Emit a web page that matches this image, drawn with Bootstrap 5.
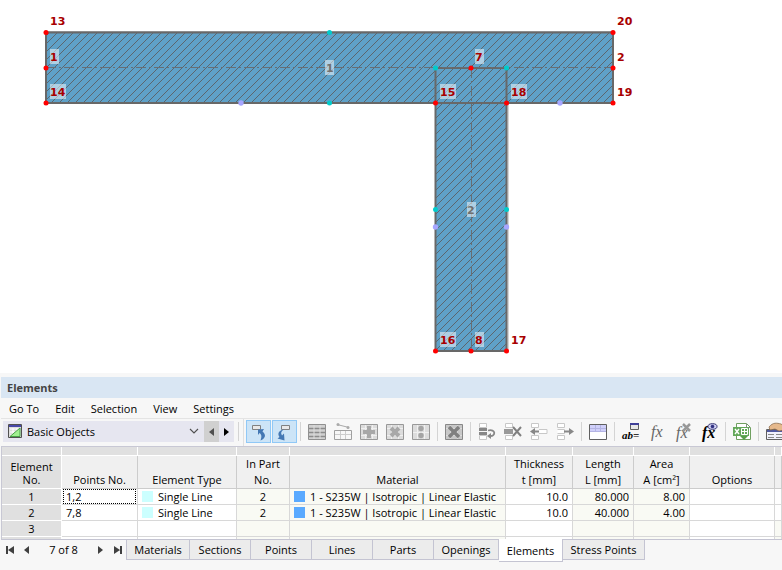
<!DOCTYPE html>
<html lang="en">
<head>
<meta charset="utf-8">
<meta name="viewport" content="width=device-width, initial-scale=1">
<title>Elements</title>
<link href="https://cdn.jsdelivr.net/npm/bootstrap@5.3.0/dist/css/bootstrap.min.css" rel="stylesheet">
<style>
  body { font: 11px/16px "Open Sans", "Noto Sans", sans-serif; color: #000; background: #f7f7f7; }
  button, select { font: inherit; color: inherit; }
  .model text { font: bold 11px "DejaVu Sans", sans-serif; fill: #a80000; }
  .model .element-no { fill: #707070; }
  .elements-panel { padding-left: 1px; }
  .panel-title { font-size: 11px; line-height: 21px; font-weight: 700; color: #444; background: #d9e6f3; padding-left: 6px; margin: 0; }
  .menu-bar { height: 21px; padding: 1px 0 0 8px; gap: 16px; border-bottom: 1px solid #e4e4e4; }
  .menu-bar a { color: #000; text-decoration: none; line-height: 20px; }
  .tool-bar { height: 27px; padding: 1px 0 3px 2px; }
  .tool-bar > * { flex: none; }
  .tool-bar svg { overflow: visible; }
  .tool-bar button, .pager button { border: 0; background: none; padding: 0; display: flex; align-items: center; justify-content: center; }
  .tool-btn { width: 26px; height: 23px; }
  .tool-bar .tool-on { width: 25px; height: 23px; background: #cce4f7; border: 1px solid #90c8f6; margin-right: 1px; }
  .tool-bar .tool-on + .tool-sep { margin-left: 2px; }
  .tool-sep { width: 1px; height: 19px; margin: 2px 3px; background: #d4d4d4; }
  .tool-edge { width: 1px; height: 27px; margin: -1px 2px 0 1px; background: #e0e0e0; }
  .formula { font: italic 16px "Liberation Serif", serif; fill: #666; }
  .formula-dark { font-weight: bold; fill: #000; }
  .parameter { font: italic bold 11px "Liberation Serif", serif; }
  .picker { width: 201px; height: 21px; margin-top: 1px; background: #e6e6f0; }
  .picker select { appearance: none; border: 0; background: none; padding: 0 24px; width: 100%; height: 21px; }
  .picker svg { pointer-events: none; left: 5px; top: 3px; }
  .picker svg.chev { left: auto; right: 5px; top: 7px; }
  .tool-bar .step { width: 15px; height: 21px; margin-top: 1px; background: #e6e6f0; }
  .tool-bar .step-off { background: #d0d0d0; }
  .grid-box { border-top: 1px solid #c8c8d4; border-bottom: 1px solid #c4c4d2; border-left: 1px solid #c8c8d4; }
  .grid-table { table-layout: fixed; width: 100%; border-collapse: separate; border-spacing: 0; }
  .grid-table th, .grid-table td { padding: 0; height: 16px; line-height: 15px; border-right: 1px solid #d8d8d8; border-bottom: 1px solid #d8d8d8; background: #fff; white-space: nowrap; overflow: hidden; }
  .grid-table thead th { font-weight: 400; text-align: center; vertical-align: bottom; background: #f0f0f0; height: 32px; line-height: 16px; border-color: #ccc; }
  .grid-table .strip td { height: 9px; background: #e0e0e0; border-color: #fff; }
  .grid-table tbody th, .grid-table thead th:first-child { font-weight: 400; text-align: center; background: #e0e0e0; border-color: #fff; }
  .grid-table thead th:first-child { padding-bottom: 2px; line-height: 13px; }
  .grid-table .calc { background: #f9faf4; }
  .grid-table .num { text-align: right; padding-right: 4px; }
  .grid-table .more td, .grid-table .more th { height: 2px; border-bottom: 0; }
  .grid-table .points { padding-left: 4px; }
  .grid-table .with-focus { padding-left: 0; }
  .focus-cell { outline: 1px dotted #000; outline-offset: -1px; padding-left: 3px; margin: 0 1px; }
  .swatch { width: 11px; height: 11px; margin: 0 5px 0 4px; }
  .swatch-line { background: #ccffff; }
  .swatch-steel { background: #5aaaff; }
  .c-no { width: 60px; } .c-points { width: 76px; } .c-type { width: 99px; } .c-part { width: 53px; } .c-material { width: 216px; }
  .c-thick { width: 67px; } .c-length { width: 61px; } .c-area { width: 56px; } .c-options { width: 85px; }
  .pager { width: 125px; height: 20px; }
  .pager button { width: 17px; height: 20px; }
  .sheet-tab { border: 1px solid #c4c4d2; border-width: 0 1px 1px 0; background: #ececec; height: 20px; padding: 0; }
  .sheet-tab:first-child { border-left-width: 1px; }
  .sheet-tab.active { background: #fff; height: 23px; margin-top: -1px; padding-top: 1px; }
  .w-sm-tab { width: 61px; } .w-md-tab { width: 64px; } .w-op-tab { width: 65px; } .w-lg-tab { width: 82px; }
</style>
<script src="https://cdn.jsdelivr.net/npm/bootstrap@5.3.0/dist/js/bootstrap.bundle.min.js"></script>
</head>
<body>
<main>
<svg class="model d-block w-100 bg-white" viewBox="0 0 782 373" role="img" aria-label="Cross-section model">
  <defs>
    <pattern id="hatch" width="8" height="8" patternUnits="userSpaceOnUse" patternTransform="translate(2 0)"><path d="M-1 9L9 -1M-1 1L1 -1M7 9L9 7" stroke="#5c666e" fill="none"/></pattern>
  </defs>
  <path d="M46 32H613V103H506.500V351H435.500V103H46Z" fill="#5fa1c8"/>
  <path d="M46 32H613V103H506.500V351H435.500V103H46Z" fill="url(#hatch)"/>
  <path d="M45 31.500H614M508 104V352" stroke="#b0b0b0" fill="none"/>
  <path d="M46 32.500H613V103H46ZM435.500 68H506.500V351H435.500Z" fill="none" stroke="#686868" stroke-width="2"/>
  <path d="M46 67.500H613M471.500 68V351" fill="none" stroke="#666e75" stroke-dasharray="10 3 2 3"/>
  <path d="M50 49h9v15h-9zM50 84h16v15h-16zM325 60h9v15h-9zM475 49h9v15h-9zM440 84h16v15h-16zM511 84h16v15h-16zM467 202h9v15h-9zM440 332h16v15h-16zM475 332h9v15h-9z" fill="#fff" fill-opacity="0.5"/>
  <text x="50" y="25">13</text><text x="50" y="61">1</text><text x="50" y="96">14</text>
  <text x="617" y="25">20</text><text x="617" y="61">2</text><text x="617" y="96">19</text>
  <text x="475" y="61">7</text><text x="440" y="96">15</text><text x="511" y="96">18</text>
  <text x="440" y="344">16</text><text x="475" y="344">8</text><text x="511" y="344">17</text>
  <text class="element-no" x="326" y="72">1</text><text class="element-no" x="467" y="214">2</text>
  <g fill="#f00"><circle cx="46" cy="32.500" r="2.500"/><circle cx="46" cy="68" r="2.500"/><circle cx="46" cy="103" r="2.500"/><circle cx="613" cy="32.500" r="2.500"/><circle cx="613" cy="68" r="2.500"/><circle cx="613" cy="103" r="2.500"/><circle cx="471" cy="68" r="2.500"/><circle cx="435.500" cy="103" r="2.500"/><circle cx="506.500" cy="103" r="2.500"/><circle cx="435.500" cy="351" r="2.500"/><circle cx="471" cy="351" r="2.500"/><circle cx="506.500" cy="351" r="2.500"/></g>
  <g fill="#00cccc"><circle cx="329.500" cy="32.500" r="2.500"/><circle cx="329.500" cy="103" r="2.500"/><circle cx="435.500" cy="68" r="2.500"/><circle cx="506.500" cy="68" r="2.500"/><circle cx="435.500" cy="209.500" r="2.500"/><circle cx="506.500" cy="209.500" r="2.500"/></g>
  <g fill="#a6a6ff"><circle cx="241" cy="103" r="2.700"/><circle cx="560" cy="103" r="2.700"/><circle cx="435.500" cy="227" r="2.700"/><circle cx="506.500" cy="227" r="2.700"/></g>
</svg>

<section class="elements-panel pt-1">
  <h1 class="panel-title">Elements</h1>
  <nav class="menu-bar d-flex" aria-label="Table menu">
    <a href="#">Go To</a><a href="#">Edit</a><a href="#">Selection</a><a href="#">View</a><a href="#">Settings</a>
  </nav>
  <div class="tool-bar d-flex overflow-hidden" role="toolbar" aria-label="Table tools">
    <div class="picker position-relative">
      <svg class="position-absolute" width="14" height="14" viewBox="0 0 14 14"><path d="M.5.5h13v13H.5z" fill="#ddd" stroke="#505050"/><path d="M1 1h12v2H1z" fill="#4848a8"/><path d="M2 5h10M2 8h10M2 11h10M5 4v9M9 4v9" stroke="#fff"/><path d="M2 12.500L12 4v8.500z" fill="#a0f090" stroke="#48a048"/></svg>
      <select aria-label="Table group"><option>Basic Objects</option></select>
      <svg class="chev position-absolute" width="10" height="7" viewBox="0 0 10 7"><path d="M1 1l4 4 4-4" fill="none" stroke="#505050" stroke-width="1.100"/></svg>
    </div>
    <button class="step step-off" aria-label="Previous table"><svg width="5" height="8"><path d="M5 0v8L0 4z" fill="#505050"/></svg></button>
    <button class="step" aria-label="Next table"><svg width="5" height="8"><path d="M0 0v8l5-4z"/></svg></button>
    <span class="tool-sep ms-1"></span><span class="tool-edge"></span>
    <button class="tool-on" aria-label="Select in model"><svg width="18" height="18" viewBox="0 0 18 18"><path d="M2.500 2.500h8v4h-8z" fill="#e8e8e8" stroke="#808080"/><path d="M8 6.500l6-.5-1.500 2.500c4 3 3 7-2 9 1.500-4 1-6-1-7.500L8 12z" fill="#4478b4"/></svg></button>
    <button class="tool-on" aria-label="Follow selection"><svg width="18" height="18" viewBox="0 0 18 18"><path d="M5.500 2.500h8v4h-8z" fill="#e8e8e8" stroke="#808080"/><path d="M8 6.500c-5 .5-7 4-4.500 7.500L1.500 15.500l7 2-.5-7-2 2C4.500 10 5 8 8 6.500z" fill="#4478b4"/></svg></button>
    <span class="tool-sep"></span>
    <button class="tool-btn" aria-label="Fill table"><svg width="18" height="18" viewBox="0 0 18 18"><path d="M.5 1.500h17v15H.5z" fill="#d0d0d0" stroke="#909090"/><path d="M1 5.500h16M1 9.500h16M1 13.500h16" stroke="#8c8c8c" stroke-width="1.500"/><path d="M6 2v14M12 2v14" stroke="#ddd"/></svg></button>
    <button class="tool-btn" aria-label="Polyline"><svg width="18" height="18" viewBox="0 0 18 18"><path d="M1 11.500h16M6.500 8v8M11.500 8v8" stroke="#ccc"/><path d="M.5 7.500h17v9H.5z" fill="none" stroke="#a0a0a0"/><path d="M3 1.500l12 3" stroke="#aaa"/><circle cx="4" cy="1.500" r="1.500" fill="#aaa"/><circle cx="14" cy="4.500" r="1.500" fill="#aaa"/></svg></button>
    <button class="tool-btn" aria-label="Add"><svg width="18" height="18" viewBox="0 0 18 18"><path d="M.5 1.500h17v15H.5z" fill="#dcdcdc" stroke="#999"/><path d="M1 5.500h16M1 12.500h16M5.500 2v14M12.500 2v14" stroke="#f0f0f0"/><path d="M7 3h4v4h4v4h-4v4H7v-4H3V7h4z" fill="#a8a8a8"/></svg></button>
    <button class="tool-btn" aria-label="Multiply"><svg width="18" height="18" viewBox="0 0 18 18"><path d="M.5 1.500h17v15H.5z" fill="#dcdcdc" stroke="#999"/><path d="M1 5.500h16M1 12.500h16M5.500 2v14M12.500 2v14" stroke="#f0f0f0"/><path d="M5 5l8 8M13 5l-8 8" stroke="#a8a8a8" stroke-width="4"/></svg></button>
    <button class="tool-btn" aria-label="Divide"><svg width="18" height="18" viewBox="0 0 18 18"><path d="M.5 1.500h17v15H.5z" fill="#dcdcdc" stroke="#999"/><path d="M1 9.500h16M5.500 2v14M12.500 2v14" stroke="#f0f0f0"/><circle cx="9" cy="5.500" r="2.700" fill="#a4a4a4"/><circle cx="9" cy="12.500" r="2.700" fill="#a4a4a4"/></svg></button>
    <span class="tool-sep"></span>
    <button class="tool-btn" aria-label="Clear table"><svg width="18" height="18" viewBox="0 0 18 18"><path d="M.5 1.500h17v15H.5z" fill="#c8c8c8" stroke="#888"/><path d="M1 5.500h16M1 12.500h16M5.500 2v14M12.500 2v14" stroke="#ddd"/><path d="M4 4l10 10M14 4L4 14" stroke="#808080" stroke-width="3.500"/></svg></button>
    <span class="tool-sep"></span>
    <button class="tool-btn" aria-label="Insert row"><svg width="18" height="18" viewBox="0 0 18 18"><path d="M1.500 .5h7v4h-7zM1.500 12.500h7v4h-7z" fill="#fff" stroke="#c8c8c8"/><path d="M1 5h8v3H1zM1 9h8v3H1z" fill="#888"/><path d="M10 7.500c8-2 8 6 2 5.500" fill="none" stroke="#888" stroke-width="1.800"/><path d="M13 10v6l-4-3z" fill="#888"/></svg></button>
    <button class="tool-btn" aria-label="Delete row"><svg width="18" height="18" viewBox="0 0 18 18"><path d="M1.500 .5h7v4h-7zM1.500 12.500h7v4h-7z" fill="#fff" stroke="#c8c8c8"/><path d="M0 6h9v5H0z" fill="#999"/><path d="M9 4l8 9M17 4l-8 9" stroke="#808080" stroke-width="2"/></svg></button>
    <button class="tool-btn" aria-label="Move row left"><svg width="18" height="18" viewBox="0 0 18 18"><path d="M1.500 .5h7v4h-7zM1.500 12.500h7v4h-7zM9 6.500h8v4H9" fill="#fff" stroke="#c8c8c8"/><path d="M9 8.500H3" stroke="#888" stroke-width="2"/><path d="M5 5v7L0 8.500z" fill="#888"/></svg></button>
    <button class="tool-btn" aria-label="Move row right"><svg width="18" height="18" viewBox="0 0 18 18"><path d="M1.500 .5h7v4h-7zM1.500 12.500h7v4h-7zM1.500 6.500h7v4h-7" fill="#fff" stroke="#c8c8c8"/><path d="M8 8.500h6" stroke="#888" stroke-width="2"/><path d="M13 5v7l5-3.500z" fill="#888"/></svg></button>
    <span class="tool-sep"></span>
    <button class="tool-btn" aria-label="Table view"><svg width="18" height="18" viewBox="0 0 18 18"><path d="M.5 1.500h17v15H.5z" fill="#fff" stroke="#606060"/><path d="M1 2h16v6H1z" fill="#d0d0fa"/><path d="M1 5.500h16M6.500 2v6M11.500 2v6M1 8.500h16" stroke="#b4b4e4"/></svg></button>
    <span class="tool-sep"></span>
    <button class="tool-btn" aria-label="Parameters"><svg width="18" height="18" viewBox="0 0 18 18"><path d="M8.500 .5h8v6h-8z" fill="#e8e8e8" stroke="#606060"/><path d="M8 0h9v2H8z" fill="#404098"/><text class="parameter" x="0" y="16">ab=</text></svg></button>
    <button class="tool-btn" aria-label="Formula"><svg width="18" height="18" viewBox="0 0 18 18"><text class="formula" x="3" y="14">fx</text></svg></button>
    <button class="tool-btn" aria-label="Delete formulas"><svg width="18" height="18" viewBox="0 0 18 18"><text class="formula" x="2" y="15">fx</text><path d="M9 1l7 7M16 1L9 8" stroke="#989898" stroke-width="2.500"/></svg></button>
    <button class="tool-btn" aria-label="Show formulas"><svg width="18" height="18" viewBox="0 0 18 18"><text class="formula formula-dark" x="2" y="15">fx</text><ellipse cx="12.500" cy="3.500" rx="4.500" ry="2.800" fill="#d0d0f4" stroke="#303070"/><circle cx="12.500" cy="3.500" r="1.800" fill="#303080"/></svg></button>
    <span class="tool-sep"></span>
    <button class="tool-btn" aria-label="Export to Excel"><svg width="18" height="18" viewBox="0 0 18 18"><path d="M3.500 .5h10l4 4v12h-14z" fill="#fff" stroke="#70a060"/><path d="M13.500 1v3.500H17" fill="none" stroke="#888"/><path d="M0 4h16v9H0z" fill="#64a85a"/><path d="M2 6l4 5M6 6l-4 5" stroke="#fff" stroke-width="1.400"/><path d="M8.500 5.500h6v6h-6zM8.500 8.500h6M11.500 5.500v6" fill="none" stroke="#fff"/><path d="M7 13h8l-4 4z" fill="#58a04c"/></svg></button>
    <span class="tool-sep"></span>
    <button class="tool-btn" aria-label="Table settings"><svg width="18" height="18" viewBox="0 0 18 18"><path d="M.5 6.500h17v10H.5z" fill="#f0f0fa" stroke="#606060"/><path d="M1 7h16v2H1z" fill="#5058a0"/><path d="M2 11.500h6M2 14.500h6M10 11.500h6M10 14.500h6" stroke="#888"/><path d="M3 4c4-5 8-4 12-3l3 2v4l-5 1-4-2-5 1z" fill="#e6b98c" stroke="#806040" stroke-width=".7"/></svg></button>
  </div>

  <div class="grid-box">
    <table class="grid-table">
      <colgroup><col class="c-no"><col class="c-points"><col class="c-type"><col class="c-part"><col class="c-material"><col class="c-thick"><col class="c-length"><col class="c-area"><col class="c-options"><col></colgroup>
      <thead>
        <tr class="strip"><td></td><td></td><td></td><td></td><td></td><td></td><td></td><td></td><td></td><td></td></tr>
        <tr><th scope="col">Element<br>No.</th><th scope="col">Points No.</th><th scope="col">Element Type</th><th scope="col">In Part<br>No.</th><th scope="col">Material</th><th scope="col">Thickness<br>t [mm]</th><th scope="col">Length<br>L [mm]</th><th scope="col">Area<br>A [cm²]</th><th scope="col">Options</th><th></th></tr>
      </thead>
      <tbody>
        <tr><th scope="row">1</th><td class="points with-focus"><div class="focus-cell">1,2</div></td><td><div class="d-flex align-items-center"><span class="swatch swatch-line"></span>Single Line</div></td><td class="calc text-center">2</td><td class="calc"><div class="d-flex align-items-center"><span class="swatch swatch-steel"></span>1 - S235W | Isotropic | Linear Elastic</div></td><td class="num">10.0</td><td class="calc num">80.000</td><td class="calc num">8.00</td><td></td><td></td></tr>
        <tr><th scope="row">2</th><td class="points">7,8</td><td><div class="d-flex align-items-center"><span class="swatch swatch-line"></span>Single Line</div></td><td class="calc text-center">2</td><td class="calc"><div class="d-flex align-items-center"><span class="swatch swatch-steel"></span>1 - S235W | Isotropic | Linear Elastic</div></td><td class="num">10.0</td><td class="calc num">40.000</td><td class="calc num">4.00</td><td></td><td></td></tr>
        <tr><th scope="row">3</th><td></td><td></td><td class="calc"></td><td class="calc"></td><td></td><td class="calc"></td><td class="calc"></td><td></td><td class="calc"></td></tr>
        <tr class="more"><th></th><td></td><td></td><td class="calc"></td><td class="calc"></td><td></td><td class="calc"></td><td class="calc"></td><td></td><td class="calc"></td></tr>
      </tbody>
    </table>
  </div>

  <div class="d-flex">
    <div class="pager d-flex align-items-center">
      <button aria-label="First"><svg width="8" height="8"><path d="M0 0h2v8H0zM8 0v8L2 4z" fill="#404040"/></svg></button>
      <button aria-label="Previous"><svg width="5" height="8"><path d="M5 0v8L0 4z" fill="#404040"/></svg></button>
      <span class="flex-grow-1 text-center">7 of 8</span>
      <button aria-label="Next"><svg width="5" height="8"><path d="M0 0v8l5-4z" fill="#404040"/></svg></button>
      <button aria-label="Last"><svg width="8" height="8"><path d="M6 0h2v8H6zM0 0v8l6-4z" fill="#404040"/></svg></button>
    </div>
    <div class="d-flex" role="tablist">
      <button class="sheet-tab w-md-tab" role="tab">Materials</button><button class="sheet-tab w-sm-tab" role="tab">Sections</button><button class="sheet-tab w-sm-tab" role="tab">Points</button><button class="sheet-tab w-sm-tab" role="tab">Lines</button><button class="sheet-tab w-sm-tab" role="tab">Parts</button><button class="sheet-tab w-op-tab" role="tab">Openings</button><button class="sheet-tab w-md-tab active" role="tab" aria-selected="true">Elements</button><button class="sheet-tab w-lg-tab" role="tab">Stress Points</button>
    </div>
  </div>
</section>
</main>
</body>
</html>
